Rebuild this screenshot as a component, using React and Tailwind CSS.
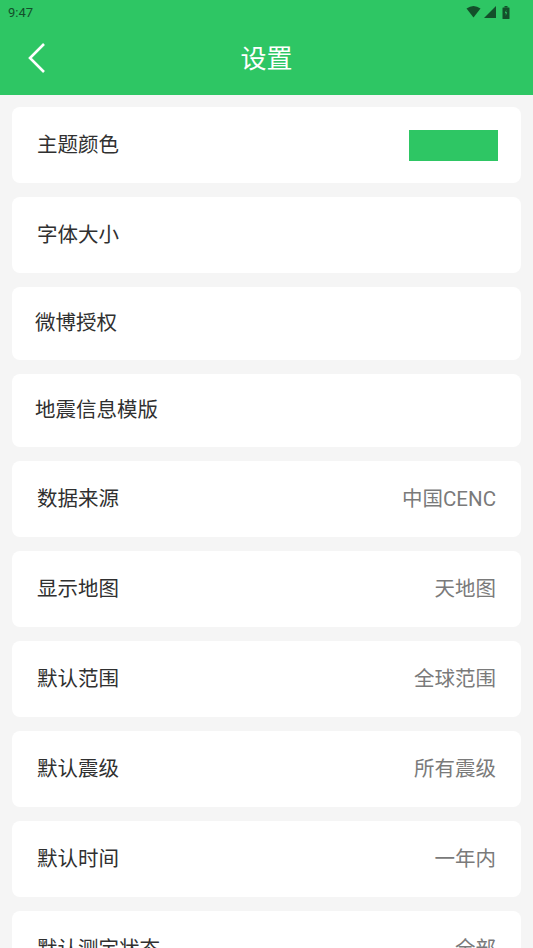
import React from "react";

const rows = [
  { label: "主题颜色", swatch: true },
  { label: "字体大小" },
  { label: "微博授权", short: true },
  { label: "地震信息模版", short: true },
  { label: "数据来源", value: "中国CENC" },
  { label: "显示地图", value: "天地图" },
  { label: "默认范围", value: "全球范围" },
  { label: "默认震级", value: "所有震级" },
  { label: "默认时间", value: "一年内" },
  { label: "默认测定状态", value: "全部" },
];

function StatusBar() {
  return (
    <div className="h-6 flex items-center justify-between pl-2 pr-[23px] text-[#134f2a]">
      <span className="text-[13px] leading-none">9:47</span>
      <div className="flex items-center gap-[3px]">
        <svg width="15" height="12" viewBox="0 0 15 12">
          <path d="M0.5 2.5 Q7.5 -2.5 14.5 2.5 L7.5 11.5 Z" fill="currentColor" />
        </svg>
        <svg width="12" height="12" viewBox="0 0 12 12">
          <path d="M12 0 L12 12 L0 12 Z" fill="currentColor" />
        </svg>
        <svg width="8" height="13" viewBox="0 0 8 13" className="ml-[3px]">
          <rect x="2.5" y="0" width="3" height="1.5" fill="currentColor" />
          <rect x="0.5" y="1.5" width="7" height="11.5" rx="0.5" fill="currentColor" />
          <path d="M4.4 3.5 L2.8 7.2 L4 7.2 L3.6 10 L5.2 6.3 L4 6.3 Z" fill="#2ec664" />
        </svg>
      </div>
    </div>
  );
}

function Row({ row }) {
  return (
    <div
      className={`bg-white rounded-lg flex items-center justify-between pr-[25px] ${
        row.short ? "h-[73px] pl-[23px]" : "h-[76px] pl-[25px]"
      }`}
    >
      <span className="text-[20.5px] text-[#303030]">{row.label}</span>
      {row.swatch && <div className="w-[89px] h-[31px] bg-[#2ec664] -mr-[2px]" />}
      {row.value && <span className="text-[20.5px] text-[#7a7a7a]">{row.value}</span>}
    </div>
  );
}

export default function App() {
  return (
    <div
      className="w-[533px] h-[948px] overflow-hidden bg-[#f5f5f5]"
      style={{ fontFamily: '"Roboto", "Noto Sans CJK SC", sans-serif' }}
    >
      <div className="bg-[#2ec664]">
        <StatusBar />
        <div className="h-[71px] relative flex items-center justify-center">
          <svg
            width="20"
            height="32"
            viewBox="0 0 20 32"
            className="absolute left-[27px] top-[18px]"
          >
            <path d="M17 2 L3 16 L17 30" stroke="white" strokeWidth="2.6" fill="none" />
          </svg>
          <span className="text-[26px] text-white leading-none -mt-[2px]">设置</span>
        </div>
      </div>
      <div className="px-3 pt-3 flex flex-col gap-[14px]">
        {rows.map((row) => (
          <Row key={row.label} row={row} />
        ))}
      </div>
    </div>
  );
}
